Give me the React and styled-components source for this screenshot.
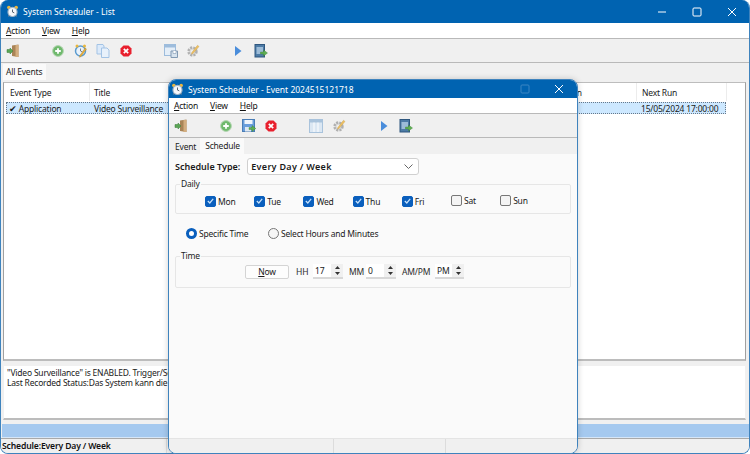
import React from "react";
import styled, { createGlobalStyle } from "styled-components";

const Global = createGlobalStyle`
  html, body { margin: 0; padding: 0; background: #fff; }
  body { font-family: "Noto Sans", "Liberation Sans", sans-serif; font-size: 8.5px; letter-spacing: -0.2px; color: #1a1a1a; }
  * { box-sizing: border-box; }
`;

const Desktop = styled.div`
  position: relative;
  width: 750px;
  height: 454px;
  overflow: hidden;
`;

const Window = styled.div`
  display: flex;
  flex-direction: column;
  background: #f0f0f0;
  border: 1px solid #3f83bd;
  border-top: none;
  border-radius: 8px;
  overflow: hidden;
  width: 100%;
  height: 100%;
`;

const Dialog = styled(Window)`
  position: absolute;
  left: 168px;
  top: 79px;
  width: 410px;
  height: 375px;
  background: #fafafa;
  border: 1px solid #3f83bd;
  box-shadow: 0 0 6px rgba(0, 0, 0, 0.18);
`;

const TitleBar = styled.div`
  display: flex;
  align-items: center;
  flex: none;
  height: ${(p) => p.$h}px;
  background: #0063b1;
  color: #fff;
  font-size: 8.5px;
  letter-spacing: 0;
  padding-left: ${(p) => p.$pad}px;
  gap: 4px;
`;

const TitleText = styled.span`
  flex: 1;
  white-space: nowrap;
`;

const WinButtons = styled.div`
  display: flex;
  height: 100%;
  align-items: center;
`;

const WinButton = styled.span`
  display: flex;
  width: ${(p) => p.$w}px;
  justify-content: center;
  align-items: center;
  color: ${(p) => (p.$dim ? "#3b86c3" : "#fff")};
`;

const MenuBar = styled.div`
  display: flex;
  flex: none;
  height: 16px;
  align-items: center;
  background: #fff;
  padding-left: 5px;
  gap: 12px;
  border-bottom: 1px solid #b9b9b9;
  color: #111;
`;

const MenuItem = styled.span`
  & u { text-decoration: underline; text-underline-offset: 1px; }
`;

const ToolBar = styled.div`
  display: flex;
  flex: none;
  height: 24px;
  align-items: center;
  background: #f0f0f0;
  padding-left: 1px;
  border-bottom: 1px solid #b9b9b9;
`;

const ToolSlot = styled.span`
  display: flex;
  width: 22.5px;
  height: 16px;
  align-items: center;
  justify-content: center;
`;

const TabStrip = styled.div`
  display: flex;
  flex: none;
  height: ${(p) => p.$h}px;
  align-items: flex-end;
  padding-left: 2px;
  background: #f0f0f0;
`;

const Tab = styled.div`
  display: flex;
  align-items: center;
  padding: 0 4px 2px ${(p) => p.$pad}px;
  height: ${(p) => (p.$active ? 16 : 14)}px;
  background: ${(p) => (p.$active ? "#fafafa" : "#f0f0f0")};
  color: #222;
`;

const MainBody = styled.div`
  display: flex;
  flex-direction: column;
  flex: 1;
  min-height: 0;
`;

const ListPanel = styled.div`
  flex: none;
  height: 279px;
  margin: 2px 3px 0 2px;
  background: #fff;
  border: 1px solid #a0a0a0;
  border-bottom: 2px solid #bcbcbc;
  border-top-color: #bdbdbd;
`;

const ListHeader = styled.div`
  display: flex;
  height: 18px;
  align-items: center;
`;

const HeadCell = styled.span`
  display: flex;
  align-items: center;
  width: ${(p) => p.$w}px;
  height: 100%;
  padding-left: ${(p) => p.$pad}px;
  border-right: 1px solid #ececec;
`;

const Row = styled.div`
  display: flex;
  height: 12px;
  width: 720px;
  margin-left: 2px;
  margin-top: 1px;
  align-items: center;
  background: #cde8ff;
  outline: 1px dotted #66788a;
  outline-offset: -1px;
`;

const RowCell = styled.span`
  display: flex;
  align-items: center;
  width: ${(p) => p.$w}px;
  padding-left: ${(p) => p.$pad}px;
  white-space: nowrap;
  gap: 2px;
`;

const InfoPanel = styled.div`
  flex: none;
  height: 55px;
  margin: 4px 3px 0 2px;
  background: #fff;
  border: 1px solid #f0f0f0;
  border-bottom: 2px solid #bcbcbc;
  padding: 2px 3px;
  line-height: 10px;
  white-space: nowrap;
  overflow: hidden;
`;

const ProgressBar = styled.div`
  flex: none;
  height: 14px;
  margin: 4px 0 0 1px;
  background: #a5c9ef;
  border-bottom: 1px solid #d6e6f7;
`;

const StatusBar = styled.div`
  display: flex;
  flex: 1;
  align-items: center;
  border-top: 1px solid #a9a9a9;
  background: #f0f0f0;
  color: #111;
`;

const StatusCell = styled.span`
  display: flex;
  align-items: center;
  width: 166px;
  height: 100%;
  padding-left: 1px;
  font-weight: 600;
  font-size: 8.6px;
  letter-spacing: -0.15px;
  white-space: nowrap;
  border-right: 1px solid #dcdcdc;
`;

const Content = styled.div`
  flex: none;
  height: 284px;
  display: flex;
  flex-direction: column;
  background: #fafafa;
  padding: 3px 6px 0 6px;
`;

const TypeRow = styled.div`
  display: flex;
  align-items: center;
  height: 18px;
  gap: 7px;
  font-weight: 600;
  font-size: 9px;
  letter-spacing: 0;
  white-space: nowrap;
`;

const Select = styled.div`
  display: flex;
  align-items: center;
  justify-content: space-between;
  width: 172px;
  height: 17px;
  background: #fff;
  border: 1px solid #d0d0d0;
  border-radius: 3px;
  padding: 0 5px 0 3px;
  font-weight: 600;
  letter-spacing: 0.3px;
`;

const Group = styled.fieldset`
  margin: ${(p) => p.$mt}px 0 0 0;
  padding: 0;
  width: 396px;
  height: ${(p) => p.$h}px;
  border: 1px solid #e6e6e6;
  border-radius: 2px;
  & > legend { margin-left: 4px; padding: 0 1px; line-height: 10px; color: #222; }
`;

const DaysRow = styled.div`
  display: flex;
  align-items: center;
  height: 24px;
  padding-left: 29px;
`;

const Day = styled.label`
  display: flex;
  align-items: center;
  width: 49.2px;
  gap: 2px;
  position: relative;
  top: ${(p) => (p.$checked ? 0 : -1)}px;
`;

const Check = styled.span`
  display: flex;
  width: 11px;
  height: 11px;
  border-radius: 2px;
  align-items: center;
  justify-content: center;
  background: ${(p) => (p.$on ? "#0a5fbd" : "#f4f4f4")};
  border: 1px solid ${(p) => (p.$on ? "#0a5fbd" : "#777")};
`;

const RadioRow = styled.div`
  display: flex;
  align-items: center;
  height: 16px;
  margin-top: 11px;
  padding-left: 11px;
  white-space: nowrap;
`;

const RadioItem = styled.label`
  display: flex;
  align-items: center;
  width: ${(p) => p.$w}px;
  gap: 2px;
`;

const Radio = styled.span`
  width: 11px;
  height: 11px;
  border-radius: 50%;
  background: ${(p) => (p.$on ? "#fff" : "#f6f6f6")};
  border: ${(p) => (p.$on ? "3px solid #0a5fbd" : "1px solid #777")};
`;

const TimeRow = styled.div`
  display: flex;
  align-items: center;
  height: 21px;
  padding-left: 69px;
`;

const NowButton = styled.span`
  display: flex;
  width: 44px;
  height: 14px;
  align-items: center;
  justify-content: center;
  background: #fdfdfd;
  border: 1px solid #d4d4d4;
  border-radius: 2px;
  margin-right: 7px;
`;

const TimeLabel = styled.span`
  width: ${(p) => p.$w}px;
  white-space: nowrap;
  letter-spacing: -0.15px;
  color: #2a2a2a;
`;

const Spin = styled.div`
  display: flex;
  width: ${(p) => p.$w}px;
  height: 15px;
  margin-right: 6px;
  background: #fff;
  border-bottom: 2px solid #d8d8d8;
  padding-left: 2px;
  align-items: center;
  justify-content: space-between;
`;

const SpinArrows = styled.span`
  display: flex;
  flex-direction: column;
  width: 12px;
  height: 100%;
  background: #f0f0f0;
  align-items: center;
  justify-content: space-around;
  font-size: 0;
`;

const DialogFooter = styled.div`
  flex: 1;
  display: flex;
  background: #f0f0f0;
  border-top: 1px solid #e4e4e4;
`;

const FootCell = styled.span`
  width: ${(p) => p.$w}px;
  border-right: 1px solid #dcdcdc;
`;

const Arrow = ({ down }) => (
  <svg width="5" height="3" viewBox="0 0 5 3"><path d={down ? "M0 0h5L2.5 3z" : "M0 3h5L2.5 0z"} fill="#333" /></svg>
);

const Clock = ({ s = 13 }) => (
  <svg width={s} height={s} viewBox="0 0 16 16">
    <circle cx="3.5" cy="3" r="2.2" fill="#e9b63c" /><circle cx="12.5" cy="3" r="2.2" fill="#e9b63c" />
    <path d="M3 14l2-2M13 14l-2-2" stroke="#888" strokeWidth="1.4" />
    <circle cx="8" cy="8.5" r="5.6" fill="#f5f7fa" stroke="#9fb3c6" strokeWidth="1.4" />
    <path d="M8 5.5v3.2l2.2 1" stroke="#345" strokeWidth="1" fill="none" />
  </svg>
);

const Exit = () => (
  <svg width="14" height="14" viewBox="0 0 14 14">
    <path d="M6 1.500l6.500-1V13l-6.500-1z" fill="#a98457" /><path d="M9.500 1h3v12h-3z" fill="#d3ad7f" />
    <path d="M1 5.500h3V4l3 3-3 3V8.500H1z" fill="#5aa655" stroke="#3a7a38" strokeWidth=".5" />
  </svg>
);

const Add = () => (
  <svg width="12" height="12" viewBox="0 0 12 12">
    <circle cx="6" cy="6" r="5.400" fill="#6fb96d" stroke="#b3d5b1" strokeWidth="1" />
    <path d="M6 3.200v5.600M3.200 6h5.600" stroke="#fff" strokeWidth="1.800" />
  </svg>
);

const Del = () => (
  <svg width="12" height="12" viewBox="0 0 12 12">
    <path d="M3.500.5h5l3 3v5l-3 3h-5l-3-3v-5z" fill="#e8202e" />
    <path d="M3.800 3.800l4.400 4.400M8.200 3.800L3.800 8.200" stroke="#fff" strokeWidth="1.700" />
  </svg>
);

const ClockEdit = () => (
  <svg width="14" height="14" viewBox="0 0 14 14">
    <circle cx="6.500" cy="7" r="5" fill="#eaf2fa" stroke="#5a9bd0" strokeWidth="1.500" />
    <circle cx="3" cy="2" r="1.500" fill="#e9b63c" /><circle cx="10.500" cy="2" r="1.500" fill="#e9b63c" />
    <path d="M6.500 4.500V7l2 1" stroke="#567" fill="none" strokeWidth=".8" />
    <path d="M12.500 5L7 12.500l-1.500.8.300-1.700L11.200 4z" fill="#e8b13c" stroke="#b07f20" strokeWidth=".4" />
  </svg>
);

const Copy = () => (
  <svg width="14" height="14" viewBox="0 0 14 14">
    <path d="M1 .5h6l1 1.500v8H1z" fill="#dceafa" stroke="#a3c3e5" />
    <path d="M5.500 4h5.500l2 2v7.500H5.500z" fill="#e8f1fb" stroke="#a3c3e5" />
  </svg>
);

const Report = () => (
  <svg width="14" height="14" viewBox="0 0 14 14">
    <rect x=".5" y=".5" width="11" height="11" fill="#e4eef8" stroke="#9dbcdc" />
    <path d="M1 1h10v2.500H1z" fill="#9dbcdc" />
    <path d="M7 7h6.500v6.500H7z" fill="#d7e3ee" stroke="#8199b2" />
    <path d="M9 7v2.500h3V7" fill="#fff" stroke="#8199b2" strokeWidth=".6" />
  </svg>
);

const Table = () => (
  <svg width="14" height="14" viewBox="0 0 14 14">
    <rect x=".5" y=".5" width="13" height="13" fill="#dbe7f3" stroke="#a9c3dc" />
    <path d="M1 1h12v2.500H1z" fill="#a9c3dc" />
    <path d="M5 3.500V13M9 3.500V13" stroke="#fff" />
  </svg>
);

const Gear = () => (
  <svg width="14" height="14" viewBox="0 0 14 14">
    <circle cx="6.500" cy="7.500" r="4" fill="#d8d8d8" stroke="#b0b0b0" strokeWidth="2.400" strokeDasharray="2 1.200" />
    <circle cx="6.500" cy="7.500" r="1.800" fill="#efefef" />
    <path d="M13 2.500L7 9.500l-1.500.7.300-1.600L11.500 1.300z" fill="#edc063" stroke="#c9a04a" strokeWidth=".4" />
  </svg>
);

const Play = () => (
  <svg width="10" height="12" viewBox="0 0 10 12"><path d="M2 1l6.500 5L2 11z" fill="#4a8ddb" /></svg>
);

const Export = () => (
  <svg width="14" height="14" viewBox="0 0 14 14">
    <rect x="1" y=".5" width="9.500" height="12.500" fill="#4d7ba6" stroke="#2f577f" />
    <path d="M2.500 3h6.500v7h-6.500z" fill="#9dbcd8" />
    <path d="M6.500 8h3V6l4 3-4 3v-2h-3z" fill="#5fae52" stroke="#3a8033" strokeWidth=".4" />
  </svg>
);

const SaveIcon = () => (
  <svg width="14" height="14" viewBox="0 0 14 14">
    <rect x=".5" y=".5" width="12" height="12" fill="#6a9edb" stroke="#4a7db5" />
    <rect x="2.500" y="1" width="8" height="4" fill="#f0f5fb" />
    <rect x="3" y="8" width="6" height="4.500" fill="#dfe8f2" />
    <path d="M7 8.500h3V6.500l3.800 3-3.800 3v-2H7z" fill="#5fae52" stroke="#3a8033" strokeWidth=".4" />
  </svg>
);

const Tick = () => (
  <svg width="7" height="6" viewBox="0 0 7 6"><path d="M.8 3l2 2L6.200.8" stroke="#c8e2fb" strokeWidth="1.200" fill="none" /></svg>
);

const Minimize = () => <svg width="10" height="10" viewBox="0 0 10 10"><path d="M1 5h8" stroke="currentColor" /></svg>;
const Maximize = () => <svg width="10" height="10" viewBox="0 0 10 10"><rect x="1" y="1" width="8" height="8" rx="1" fill="none" stroke="currentColor" /></svg>;
const Close = () => <svg width="10" height="10" viewBox="0 0 10 10"><path d="M1 1l8 8M9 1l-8 8" stroke="currentColor" /></svg>;

const Menus = () => (
  <MenuBar>
    <MenuItem><u>A</u>ction</MenuItem>
    <MenuItem><u>V</u>iew</MenuItem>
    <MenuItem><u>H</u>elp</MenuItem>
  </MenuBar>
);

const DayBox = ({ label, on }) => (
  <Day $checked={on}>
    <Check $on={on}>{on && <Tick />}</Check>{label}
  </Day>
);

const SpinBox = ({ w, value }) => (
  <Spin $w={w}>
    {value}
    <SpinArrows><Arrow /><Arrow down /></SpinArrows>
  </Spin>
);

export default function App() {
  return (
    <Desktop>
      <Global />
      <Window>
        <TitleBar $h={23} $pad={5}>
          <Clock />
          <TitleText>System Scheduler - List</TitleText>
          <WinButtons>
            <WinButton $w={34}><Minimize /></WinButton>
            <WinButton $w={35}><Maximize /></WinButton>
            <WinButton $w={35}><Close /></WinButton>
          </WinButtons>
        </TitleBar>
        <Menus />
        <ToolBar>
          <ToolSlot><Exit /></ToolSlot><ToolSlot />
          <ToolSlot><Add /></ToolSlot><ToolSlot><ClockEdit /></ToolSlot><ToolSlot><Copy /></ToolSlot><ToolSlot><Del /></ToolSlot><ToolSlot />
          <ToolSlot><Report /></ToolSlot><ToolSlot><Gear /></ToolSlot><ToolSlot />
          <ToolSlot><Play /></ToolSlot><ToolSlot><Export /></ToolSlot>
        </ToolBar>
        <TabStrip $h={17}>
          <Tab $active $pad={3}>All Events</Tab>
        </TabStrip>
        <MainBody>
          <ListPanel>
            <ListHeader>
              <HeadCell $w={86} $pad={6}>Event Type</HeadCell>
              <HeadCell $w={454} $pad={4}>Title</HeadCell>
              <HeadCell $w={93} $pad={5}>Last Run</HeadCell>
              <HeadCell $w={90} $pad={5}>Next Run</HeadCell>
            </ListHeader>
            <Row>
              <RowCell $w={84} $pad={3}>✔ Application</RowCell>
              <RowCell $w={550} $pad={4}>Video Surveillance</RowCell>
              <RowCell $w={86} $pad={1}>15/05/2024 17:00:00</RowCell>
            </Row>
          </ListPanel>
          <InfoPanel>
            "Video Surveillance" is ENABLED. Trigger/Schedule<br />
            Last Recorded Status:Das System kann die angegebene
          </InfoPanel>
          <ProgressBar />
          <StatusBar><StatusCell>Schedule:Every Day / Week</StatusCell></StatusBar>
        </MainBody>
      </Window>

      <Dialog>
        <TitleBar $h={18} $pad={2}>
          <Clock />
          <TitleText>System Scheduler - Event 2024515121718</TitleText>
          <WinButtons>
            <WinButton $w={32} $dim><Maximize /></WinButton>
            <WinButton $w={36}><Close /></WinButton>
          </WinButtons>
        </TitleBar>
        <Menus />
        <ToolBar>
          <ToolSlot><Exit /></ToolSlot><ToolSlot />
          <ToolSlot><Add /></ToolSlot><ToolSlot><SaveIcon /></ToolSlot><ToolSlot><Del /></ToolSlot><ToolSlot />
          <ToolSlot><Table /></ToolSlot><ToolSlot><Gear /></ToolSlot><ToolSlot />
          <ToolSlot><Play /></ToolSlot><ToolSlot><Export /></ToolSlot>
        </ToolBar>
        <TabStrip $h={16}>
          <Tab $pad={4}>Event</Tab>
          <Tab $active $pad={5}>Schedule</Tab>
        </TabStrip>
        <Content>
          <TypeRow>
            Schedule Type:
            <Select>
              Every Day / Week
              <svg width="9" height="5" viewBox="0 0 9 5"><path d="M.5.500l4 4 4-4" stroke="#666" fill="none" /></svg>
            </Select>
          </TypeRow>
          <Group $mt={4} $h={35}>
            <legend>Daily</legend>
            <DaysRow>
              <DayBox label="Mon" on /><DayBox label="Tue" on /><DayBox label="Wed" on /><DayBox label="Thu" on /><DayBox label="Fri" on />
              <DayBox label="Sat" /><DayBox label="Sun" />
            </DaysRow>
          </Group>
          <RadioRow>
            <RadioItem $w={82}><Radio $on />Specific Time</RadioItem>
            <RadioItem $w={130}><Radio />Select Hours and Minutes</RadioItem>
          </RadioRow>
          <Group $mt={10} $h={37}>
            <legend>Time</legend>
            <TimeRow>
              <NowButton><span><u>N</u>ow</span></NowButton>
              <TimeLabel $w={17}>HH</TimeLabel><SpinBox w={30} value="17" />
              <TimeLabel $w={17}>MM</TimeLabel><SpinBox w={30} value="0" />
              <TimeLabel $w={33}>AM/PM</TimeLabel><SpinBox w={29} value="PM" />
            </TimeRow>
          </Group>
        </Content>
        <DialogFooter>
          <FootCell $w={165} /><FootCell $w={112} />
        </DialogFooter>
      </Dialog>
    </Desktop>
  );
}
